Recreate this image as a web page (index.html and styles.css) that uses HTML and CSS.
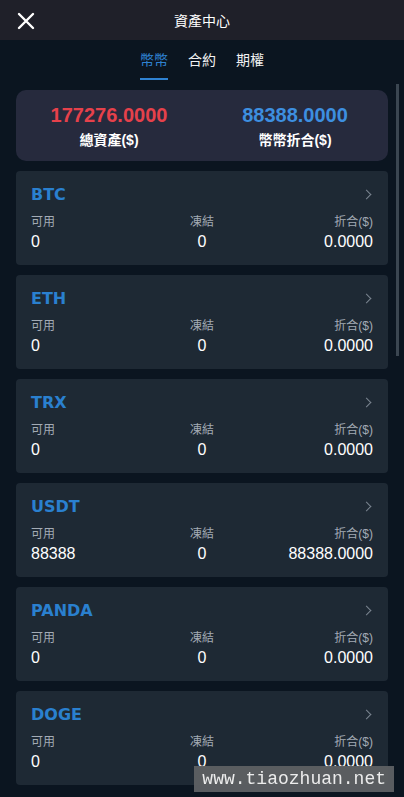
FILE: index.html
```html
<!DOCTYPE html>
<html lang="zh-Hant">
<head>
  <meta charset="UTF-8" />
  <meta name="viewport" content="width=device-width, initial-scale=1.0"/>
  <title>資產中心</title>
  <link rel="stylesheet" href="styles.css">
</head>
<body>
  <header class="topo">
    <a class="fechar" href="#">
      <svg width="18" height="18" viewBox="0 0 18 18">
        <path d="M2 2 L16 16 M16 2 L2 16" stroke="#fff" stroke-width="2.4" stroke-linecap="round"/>
      </svg>
    </a>
    <h1 class="titulo">資產中心</h1>
    <span></span>
  </header>

  <nav class="abas">
    <a href="#" class="aba ativa">幣幣</a>
    <a href="#" class="aba">合約</a>
    <a href="#" class="aba">期權</a>
  </nav>

  <main class="conteudo">
    <div class="barra-rolagem"></div>

    <section class="resumo">
      <div class="resumo-col">
        <p class="valor vermelho">177276.0000</p>
        <p class="rotulo">總資產($)</p>
      </div>
      <div class="resumo-col">
        <p class="valor azul">88388.0000</p>
        <p class="rotulo">幣幣折合($)</p>
      </div>
    </section>

    <div class="moeda">
      <div class="moeda-topo"><span class="nome">BTC</span><span class="seta"></span></div>
      <div class="linha-3"><span>可用</span><span>凍結</span><span>折合($)</span></div>
      <div class="linha-3 numeros"><span>0</span><span>0</span><span>0.0000</span></div>
    </div>
    <div class="moeda">
      <div class="moeda-topo"><span class="nome">ETH</span><span class="seta"></span></div>
      <div class="linha-3"><span>可用</span><span>凍結</span><span>折合($)</span></div>
      <div class="linha-3 numeros"><span>0</span><span>0</span><span>0.0000</span></div>
    </div>
    <div class="moeda">
      <div class="moeda-topo"><span class="nome">TRX</span><span class="seta"></span></div>
      <div class="linha-3"><span>可用</span><span>凍結</span><span>折合($)</span></div>
      <div class="linha-3 numeros"><span>0</span><span>0</span><span>0.0000</span></div>
    </div>
    <div class="moeda">
      <div class="moeda-topo"><span class="nome">USDT</span><span class="seta"></span></div>
      <div class="linha-3"><span>可用</span><span>凍結</span><span>折合($)</span></div>
      <div class="linha-3 numeros"><span>88388</span><span>0</span><span>88388.0000</span></div>
    </div>
    <div class="moeda">
      <div class="moeda-topo"><span class="nome">PANDA</span><span class="seta"></span></div>
      <div class="linha-3"><span>可用</span><span>凍結</span><span>折合($)</span></div>
      <div class="linha-3 numeros"><span>0</span><span>0</span><span>0.0000</span></div>
    </div>
    <div class="moeda">
      <div class="moeda-topo"><span class="nome">DOGE</span><span class="seta"></span></div>
      <div class="linha-3"><span>可用</span><span>凍結</span><span>折合($)</span></div>
      <div class="linha-3 numeros"><span>0</span><span>0</span><span>0.0000</span></div>
    </div>
  </main>

  <div class="marca">www.tiaozhuan.net</div>
</body>
</html>
```

FILE: styles.css
```css
body {
  margin: 0;
  background-color: #0b1520;
  font-family: "Liberation Sans", "Noto Sans CJK TC", sans-serif;
  color: #fff;
}

p {
  margin: 0;
}

.topo {
  height: 40px;
  display: grid;
  grid-template-columns: 52px 1fr 52px;
  align-items: center;
  background-color: #1f2029;
}

.fechar {
  display: flex;
  padding-left: 17px;
  padding-top: 1px;
}

.titulo {
  margin: 0;
  text-align: center;
  font-size: 14px;
  font-weight: normal;
  color: #fff;
}

.abas {
  height: 44px;
  display: flex;
  justify-content: center;
  gap: 20px;
}

.aba {
  box-sizing: border-box;
  height: 40px;
  padding-top: 12px;
  font-size: 14px;
  line-height: 16px;
  color: #f2f2f2;
  text-decoration: none;
}

.aba.ativa {
  color: #2f82d2;
  border-bottom: 2px solid #2f82d2;
}

.conteudo {
  position: relative;
  padding: 6px 16px 12px;
}

/* barra de rolagem */
.barra-rolagem {
  position: absolute;
  top: 0;
  right: 5px;
  width: 3px;
  height: 272px;
  background-color: #3b4651;
}

.resumo {
  height: 71px;
  box-sizing: border-box;
  padding-top: 13px;
  display: grid;
  grid-template-columns: 1fr 1fr;
  background-color: #262a3d;
  border-radius: 10px;
  text-align: center;
}

.valor {
  font-size: 20px;
  line-height: 24px;
  font-weight: bold;
}

.vermelho {
  color: #e6414b;
}

.azul {
  color: #3d8fe0;
}

.rotulo {
  margin-top: 3px;
  font-size: 14px;
  line-height: 20px;
  font-weight: bold;
}

.moeda {
  margin-top: 10px;
  height: 94px;
  box-sizing: border-box;
  padding: 12px 15px 0;
  background-color: #1e2934;
  border-radius: 4px;
}

.moeda-topo {
  height: 22px;
  display: flex;
  align-items: center;
  justify-content: space-between;
  margin-bottom: 9px;
}

.nome {
  font-family: "DejaVu Sans", sans-serif;
  font-size: 16px;
  font-weight: bold;
  color: #2a80cf;
}

.seta {
  width: 6px;
  height: 6px;
  margin-right: 3px;
  border-top: 1.5px solid #7b8590;
  border-right: 1.5px solid #7b8590;
  transform: rotate(45deg);
}

.linha-3 {
  display: grid;
  grid-template-columns: 1fr 1fr 1fr;
  font-size: 12px;
  line-height: 16px;
  color: #a3abb5;
}

.linha-3 span:nth-child(2) {
  text-align: center;
}

.linha-3 span:nth-child(3) {
  text-align: right;
}

.numeros {
  margin-top: 2px;
  font-size: 16px;
  line-height: 20px;
  color: #fff;
}

/* marca d'agua */
.marca {
  position: fixed;
  right: 10px;
  bottom: 5px;
  height: 26px;
  padding: 0 8px;
  background-color: rgba(92, 95, 98, 0.97);
  font-family: "Liberation Mono", monospace;
  font-size: 18px;
  line-height: 26px;
  color: #ececec;
}
```
